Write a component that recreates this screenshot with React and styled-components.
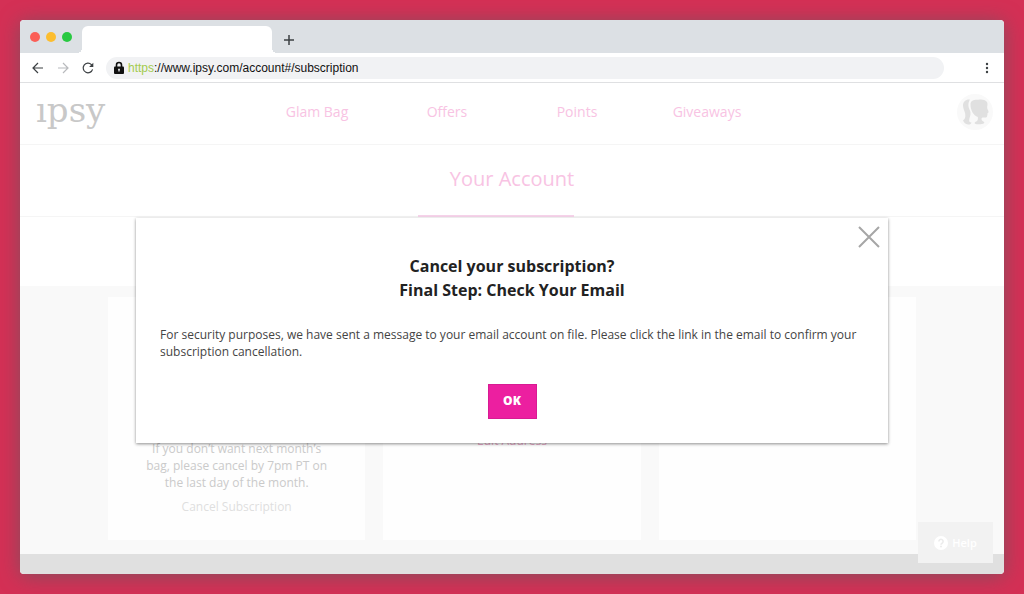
import { useState } from 'react';
import styled, { createGlobalStyle } from 'styled-components';

const GlobalStyle = createGlobalStyle`
  *, *::before, *::after {
    box-sizing: border-box;
  }

  body {
    margin: 0;
    background: #d43055;
    color: #333;
    font-family: 'Open Sans', 'Liberation Sans', sans-serif;
  }

  button, input {
    font: inherit;
    color: inherit;
  }
`;

const Desktop = styled.div`
  display: flex;
  min-height: 100vh;
  padding: 20px;
`;

const BrowserWindow = styled.div`
  position: relative;
  flex: 1 1 auto;
  min-width: 0;
  display: flex;
  flex-direction: column;
  overflow: hidden;
  border-radius: 4px;
  background: #fff;
`;

const WindowShadow = styled.div`
  flex: 1 1 auto;
  min-width: 0;
  display: flex;
  border-radius: 4px;
  box-shadow: 0 2px 20px rgba(110, 85, 95, 0.8);
`;

const TabStrip = styled.div`
  display: flex;
  align-items: flex-end;
  height: 33px;
  padding-left: 10px;
  background: #dce0e4;
`;

const Lights = styled.div`
  display: flex;
  align-self: center;
  gap: 6px;
  margin-right: 10px;
`;

const Light = styled.span`
  width: 10px;
  height: 10px;
  border-radius: 50%;
  background: ${props => props.$color};
`;

const BrowserTab = styled.div`
  position: relative;
  width: 190px;
  height: 27px;
  border-radius: 6px 6px 0 0;
  background: #fff;

  &::before,
  &::after {
    content: '';
    position: absolute;
    bottom: 0;
    width: 5px;
    height: 5px;
  }

  &::before {
    right: 100%;
    background: radial-gradient(circle at 0 0, transparent 5px, #fff 5px);
  }

  &::after {
    left: 100%;
    background: radial-gradient(circle at 100% 0, transparent 5px, #fff 5px);
  }
`;

const IconButton = styled.button`
  display: grid;
  place-items: center;
  padding: 0;
  border: 0;
  background: none;
  color: ${props => props.$color || '#3c4043'};
  cursor: pointer;

  svg {
    display: block;
  }
`;

const NewTab = styled(IconButton)`
  width: 14px;
  height: 27px;
  margin-left: 10px;
`;

const Toolbar = styled.div`
  display: flex;
  align-items: center;
  height: 30px;
  padding: 0 12px 0 11px;
  border-bottom: 1px solid #dfe0e2;
  background: #fff;
`;

const ToolbarButtons = styled.div`
  display: flex;
  gap: 11px;
  margin-right: 11px;
`;

const AddressBar = styled.label`
  flex: 1 1 auto;
  display: flex;
  align-items: center;
  height: 22px;
  margin-right: 38px;
  padding: 0 8px;
  border-radius: 11px;
  background: #f1f2f4;
  font-family: 'Liberation Sans', Arial, sans-serif;
  font-size: 12px;
  color: #111;

  svg {
    margin-right: 4px;
  }
`;

const Scheme = styled.span`
  color: #a3cb4e;
`;

const AddressInput = styled.input`
  flex: 1 1 auto;
  min-width: 0;
  padding: 0;
  border: 0;
  outline: 0;
  background: none;
`;

const Page = styled.div`
  position: relative;
  flex: 1 1 auto;
  display: flex;
  flex-direction: column;
`;

const SiteHeader = styled.header`
  display: grid;
  grid-template-columns: 1fr minmax(0, 520px) 1fr;
  align-items: center;
  height: 62px;
  padding: 0 11px 4px;
  border-bottom: 1px solid #f5f5f5;
`;

const Logo = styled.a`
  justify-self: start;
  margin-left: 5px;
  padding-bottom: 4px;
  font-family: 'DejaVu Serif', serif;
  font-size: 34px;
  line-height: 40px;
  color: #c8c8c8;
  text-decoration: none;
`;

const Nav = styled.nav`
  display: grid;
  grid-template-columns: repeat(4, 1fr);
  text-align: center;
`;

const PinkLink = styled.a`
  color: #f8c3e3;
  font-size: 14px;
  line-height: 20px;
  text-decoration: none;
`;

const Avatar = styled(IconButton)`
  justify-self: end;
  width: 36px;
  height: 36px;
  border-radius: 50%;
  background: #f9f9f9;
`;

const AccountBar = styled.div`
  display: flex;
  justify-content: center;
  height: 72px;
  border-bottom: 1px solid #f5f5f5;
`;

const AccountTab = styled(PinkLink)`
  position: relative;
  font-size: 20px;
  line-height: 68px;

  &::after {
    content: '';
    position: absolute;
    left: -32px;
    right: 0;
    bottom: -1px;
    height: 2px;
    background: #f6d3ea;
  }
`;

const SubBar = styled.div`
  height: 69px;
`;

const Content = styled.main`
  flex: 1 1 auto;
  display: flex;
  justify-content: center;
  padding: 11px 16px 14px;
  background: #f9f9f9;
`;

const Cards = styled.div`
  flex: 0 1 808px;
  display: grid;
  grid-template-columns: repeat(3, 1fr);
  gap: 18px;
`;

const Card = styled.section`
  display: flex;
  flex-direction: column;
  align-items: center;
  justify-content: flex-end;
  gap: 7px;
  min-height: 243px;
  padding: 0 32px ${props => props.$bottom || 0}px;
  background: #fefefe;
  font-size: 12px;
  line-height: 17px;
  text-align: center;
`;

const CardText = styled.p`
  max-width: 190px;
  margin: 0;
  color: #cacaca;
`;

const CardLink = styled.a`
  color: ${props => props.$color};
  text-decoration: none;
`;

const Footer = styled.footer`
  height: 20px;
  background: #e0e0e0;
`;

const HelpButton = styled.button`
  position: absolute;
  right: 11px;
  bottom: 11px;
  display: flex;
  align-items: center;
  justify-content: center;
  gap: 4px;
  width: 75px;
  height: 41px;
  padding: 0;
  border: 0;
  background: #f2f2f2;
  color: #fff;
  font-size: 11px;
  font-weight: 600;
`;

const Dialog = styled.div`
  position: absolute;
  top: 135px;
  left: 0;
  right: 0;
  width: min(752px, calc(100% - 32px));
  margin: 0 auto;
  padding: 36px 24px 24px;
  background: #fff;
  box-shadow: 0 1px 3px rgba(0, 0, 0, 0.45);
`;

const DialogTitle = styled.h2`
  margin: 0 0 24px;
  font-size: 16px;
  font-weight: 700;
  line-height: 24px;
  text-align: center;
  color: #222;
`;

const DialogText = styled.p`
  margin: 0 0 24px;
  font-size: 12px;
  line-height: 17px;
  color: #444;
`;

const CloseButton = styled(IconButton)`
  position: absolute;
  top: 8px;
  right: 8px;
`;

const OkButton = styled.button`
  display: block;
  width: 49px;
  height: 35px;
  margin: 0 auto;
  padding: 0 0 2px;
  border: 1px solid #d81b93;
  background: #ec1fa0;
  color: #fff;
  font-size: 12px;
  font-weight: 800;
  cursor: pointer;
`;

const navItems = ['Glam Bag', 'Offers', 'Points', 'Giveaways'];

const App = () => {
  const [open, setOpen] = useState(true);
  const [address, setAddress] = useState('://www.ipsy.com/account#/subscription');

  return (
    <Desktop>
      <GlobalStyle />
      <WindowShadow>
        <BrowserWindow>
          <TabStrip>
            <Lights>
              <Light $color="#fb5f57" />
              <Light $color="#fcbd2f" />
              <Light $color="#29c941" />
            </Lights>
            <BrowserTab />
            <NewTab type="button" aria-label="New tab">
              <svg width="12" height="12" viewBox="0 0 12 12" fill="none" stroke="currentColor" strokeWidth="1.5">
                <path d="M6 1v10M1 6h10" />
              </svg>
            </NewTab>
          </TabStrip>

          <Toolbar>
            <ToolbarButtons>
              <IconButton type="button" aria-label="Back">
                <svg width="14" height="14" viewBox="0 0 14 14" fill="none" stroke="currentColor" strokeWidth="1.2">
                  <path d="M12 7H2M7 2L2 7l5 5" />
                </svg>
              </IconButton>
              <IconButton type="button" aria-label="Forward" $color="#b8babd">
                <svg width="14" height="14" viewBox="0 0 14 14" fill="none" stroke="currentColor" strokeWidth="1.2">
                  <path d="M2 7h10M7 2l5 5-5 5" />
                </svg>
              </IconButton>
              <IconButton type="button" aria-label="Reload">
                <svg width="14" height="14" viewBox="0 0 14 14" fill="none" stroke="currentColor" strokeWidth="1.2">
                  <path d="M11.6 8.4A4.8 4.8 0 1 1 10.4 3.6L11.6 4.8" />
                  <path d="M12.3 1.8V6H8.1z" fill="currentColor" stroke="none" />
                </svg>
              </IconButton>
            </ToolbarButtons>
            <AddressBar>
              <svg width="10" height="14" viewBox="0 0 10 14" aria-hidden="true">
                <path d="M2.5 6.5V4a2.5 2.5 0 0 1 5 0v2.5" fill="none" stroke="#111" strokeWidth="1.6" />
                <rect y="5.6" width="10" height="7.4" rx="1" fill="#111" />
                <path d="M5 7.6v3M4 8.8h2" stroke="#f1f2f4" strokeWidth="1" />
              </svg>
              <Scheme>https</Scheme>
              <AddressInput
                aria-label="Address"
                spellCheck={false}
                value={address}
                onChange={(e) => setAddress(e.target.value)}
              />
            </AddressBar>
            <IconButton type="button" aria-label="Menu">
              <svg width="10" height="14" viewBox="0 0 10 14" fill="currentColor">
                <circle cx="5" cy="3" r="1.2" />
                <circle cx="5" cy="7" r="1.2" />
                <circle cx="5" cy="11" r="1.2" />
              </svg>
            </IconButton>
          </Toolbar>

          <Page>
            <SiteHeader>
              <Logo href="#home">ıpsy</Logo>
              <Nav>
                {navItems.map((item) => (
                  <PinkLink key={item} href="#nav">{item}</PinkLink>
                ))}
              </Nav>
              <Avatar type="button" aria-label="Profile" $color="#e0e0e0">
                <svg width="28" height="28" viewBox="0 0 28 28" fill="currentColor">
                  <path d="M9 1.5C5 1 2 3.5 2 7.5c0 3 1.5 5 2 7.5.7 3 .5 6-2 7.5 1 2 2.5 3.7 5 4 2 .2 3-.5 3.5-2-1.8.2-2.5-.8-2.3-2.5.2-2.5 1.5-4 1.3-7.5-.2-2.5-2-4-2.1-7C7.3 5 8 3 9 1.5z" />
                  <path d="M9.5 6C9.8 2.5 13 1.5 17 1.8c3.5-.8 8-.3 9.2 2.7.8 2-.2 3.5 0 5.5.2 1.7 1.6 3.2 1.4 4.3-.1.5-1 .5-1.1 1 0 .6.2 1-.2 1.6 0 2-.8 2.8-2.3 2.7-1.8-.1-3-.3-3.4.7-.4 1.5.4 2.4 1.4 3 1 .5 1.5 1 1.2 1.6-2 1.7-7 2-9.5.5-.2-1 .6-1.5 1.6-1.9 1.6-.6 1.8-2.5 1.5-4.5C12.500 17.5 9.2 12 9.5 6z" />
                </svg>
              </Avatar>
            </SiteHeader>

            <AccountBar>
              <AccountTab href="#account">Your Account</AccountTab>
            </AccountBar>
            <SubBar />

            <Content>
              <Cards>
                <Card $bottom={25}>
                  <CardText>If you don’t want next month’s bag, please cancel by 7pm PT on the last day of the month.</CardText>
                  <CardLink href="#cancel" $color="#dfdfdf">Cancel Subscription</CardLink>
                </Card>
                <Card $bottom={91}>
                  <CardLink href="#address" $color="#e8a9c8">Edit Address</CardLink>
                </Card>
                <Card />
              </Cards>
            </Content>

            {open && (
              <Dialog role="dialog" aria-labelledby="dialog-title">
                <CloseButton type="button" aria-label="Close" $color="#a6a6a6" onClick={() => setOpen(false)}>
                  <svg width="22" height="22" viewBox="0 0 22 22" fill="none" stroke="currentColor" strokeWidth="2">
                    <path d="M1 1l20 20M21 1L1 21" />
                  </svg>
                </CloseButton>
                <DialogTitle id="dialog-title">
                  Cancel your subscription?
                  <br />
                  Final Step: Check Your Email
                </DialogTitle>
                <DialogText>
                  For security purposes, we have sent a message to your email account on file. Please click the link in the email to confirm your subscription cancellation.
                </DialogText>
                <OkButton type="button" onClick={() => setOpen(false)}>OK</OkButton>
              </Dialog>
            )}
          </Page>
          <Footer />

          <HelpButton type="button">
            <svg width="14" height="14" viewBox="0 0 14 14" aria-hidden="true">
              <circle cx="7" cy="7" r="7" fill="#fff" />
              <path d="M4.9 5.4a2.1 2.1 0 1 1 3.2 1.8c-.8.5-1.1.8-1.1 1.5" fill="none" stroke="#ececec" strokeWidth="1.6" />
              <circle cx="7" cy="10.6" r="1" fill="#ececec" />
            </svg>
            Help
          </HelpButton>
        </BrowserWindow>
      </WindowShadow>
    </Desktop>
  );
};

export default App;
